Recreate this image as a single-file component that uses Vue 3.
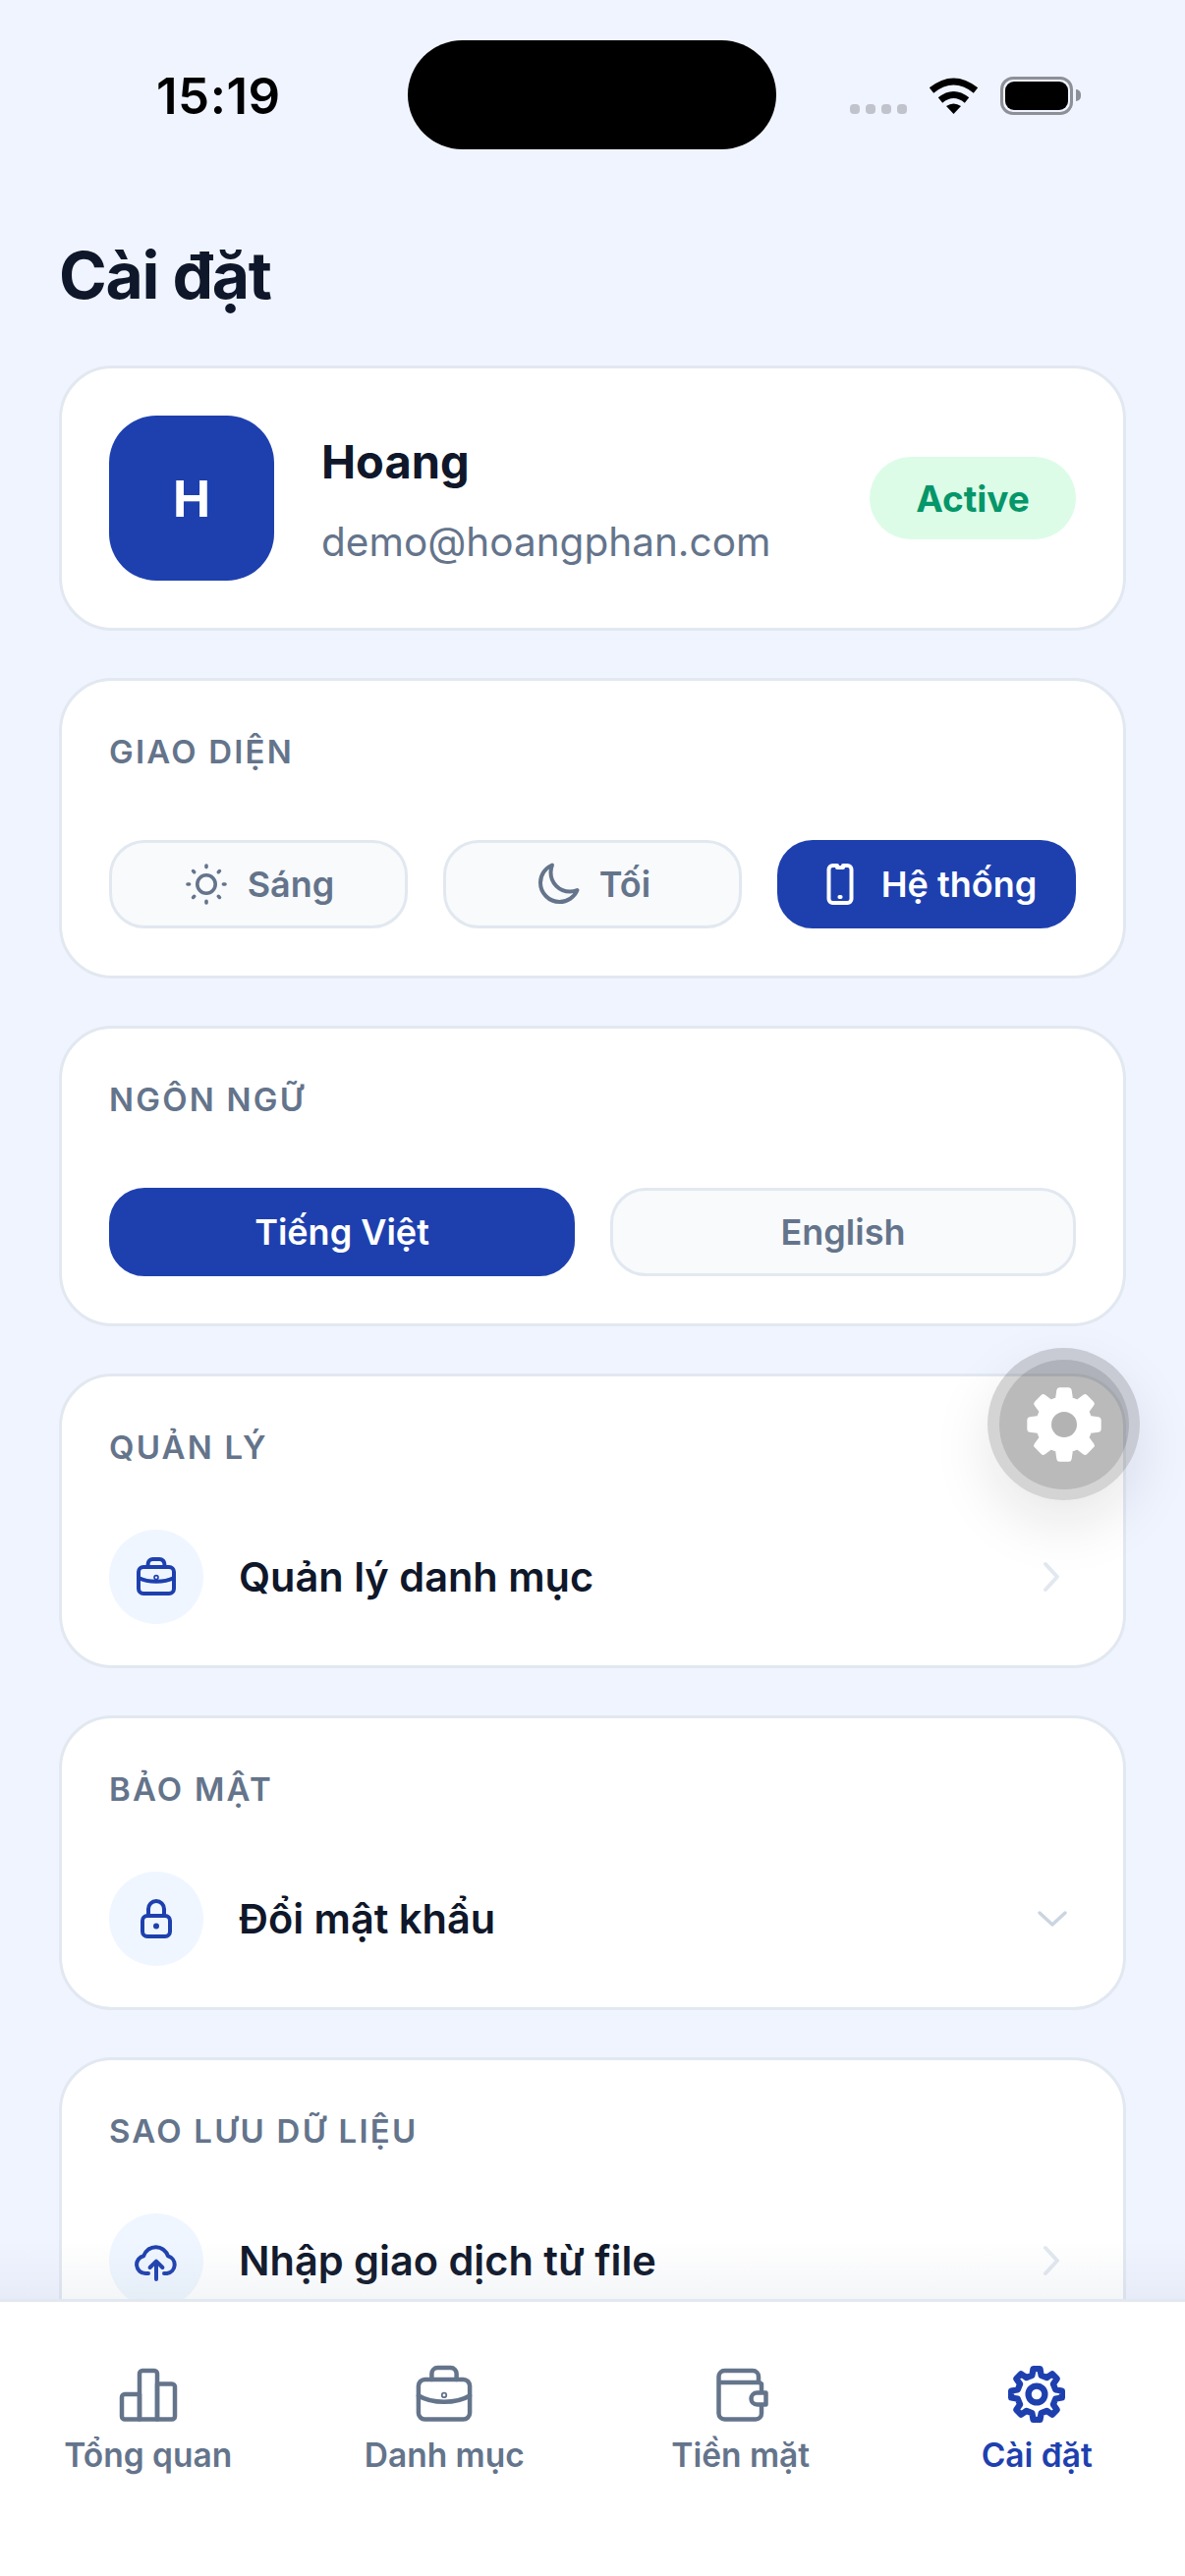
<script setup>
const themes = [
  { key: 'sun', label: 'Sáng' },
  { key: 'moon', label: 'Tối' },
  { key: 'phone', label: 'Hệ thống', active: true }
]

const navItems = [
  { key: 'chart', label: 'Tổng quan' },
  { key: 'case', label: 'Danh mục' },
  { key: 'wallet', label: 'Tiền mặt' },
  { key: 'gear', label: 'Cài đặt', active: true }
]

// tia mặt trời
const sunRays = Array.from({ length: 8 }, (_, i) => {
  const a = (i * Math.PI) / 4
  const c = Math.cos(a)
  const s = Math.sin(a)
  return {
    x1: 12 + 8.7 * c,
    y1: 12 + 8.7 * s,
    x2: 12 + 9.5 * c,
    y2: 12 + 9.5 * s
  }
})

// bánh răng 8 răng
function gearPath(cx, cy, outer, inner) {
  const n = 8
  const step = (Math.PI * 2) / n
  const pts = []
  for (let i = 0; i < n; i++) {
    const a = i * step - Math.PI / 2
    const pt = (r, d) => `${(cx + r * Math.cos(a + d)).toFixed(2)} ${(cy + r * Math.sin(a + d)).toFixed(2)}`
    pts.push(pt(inner, -step * 0.3), pt(outer, -step * 0.17), pt(outer, step * 0.17), pt(inner, step * 0.3))
  }
  return 'M' + pts.join('L') + 'Z'
}

const fabGear = gearPath(40, 40, 35, 26)
const navGear = gearPath(12, 12, 8.7, 6.6)
</script>

<template>
  <div class="screen">
    <div class="status-bar">
      <span class="time">15:19</span>
      <div class="island"></div>
      <div class="status-icons">
        <div class="signal"><i></i><i></i><i></i><i></i></div>
        <svg class="wifi" width="51" height="37" viewBox="0 0 51 37">
          <path d="M3 13Q25.500 -5 48 13" fill="none" stroke="#000" stroke-width="7" />
          <path d="M12 23Q25.500 12 39 23" fill="none" stroke="#000" stroke-width="7" />
          <path d="M18 29Q25.500 24 33 29L25.500 37Z" fill="#000" />
        </svg>
        <div class="battery"><div class="battery-fill"></div></div>
        <div class="battery-nub"></div>
      </div>
    </div>

    <h1 class="page-title">Cài đặt</h1>

    <div class="cards">
      <section class="card profile">
        <div class="avatar">H</div>
        <div class="profile-info">
          <div class="name">Hoang</div>
          <div class="email">demo@hoangphan.com</div>
        </div>
        <div class="badge">Active</div>
      </section>

      <section class="card">
        <h2 class="section-title">GIAO DIỆN</h2>
        <div class="choices">
          <button v-for="t in themes" :key="t.key" class="choice" :class="{ active: t.active }">
            <svg v-if="t.key === 'sun'" class="choice-icon" viewBox="0 0 24 24" fill="none" stroke="currentColor" stroke-width="1.800" stroke-linecap="round">
              <circle cx="12" cy="12" r="4.600" />
              <line v-for="(r, i) in sunRays" :key="i" :x1="r.x1" :y1="r.y1" :x2="r.x2" :y2="r.y2" />
            </svg>
            <svg v-else-if="t.key === 'moon'" class="choice-icon" viewBox="0 0 24 24" fill="none" stroke="currentColor" stroke-width="2" stroke-linejoin="round">
              <path d="M21.750 15A9.700 9.700 0 0 1 18 15.750C12.600 15.750 8.250 11.400 8.250 6C8.250 4.700 8.500 3.400 9 2.250A9.750 9.750 0 0 0 3 11.250C3 16.600 7.400 21 12.750 21A9.750 9.750 0 0 0 21.750 15Z" />
            </svg>
            <svg v-else class="choice-icon" viewBox="0 0 24 24" fill="none" stroke="currentColor" stroke-width="2" stroke-linecap="round" stroke-linejoin="round">
              <path d="M10.500 2.500H8.250A2 2 0 0 0 6.250 4.500V19.500A2 2 0 0 0 8.250 21.500H15.750A2 2 0 0 0 17.750 19.500V4.500A2 2 0 0 0 15.750 2.500H13.500M10.500 2.500V3.500H13.500V2.500M11.700 18.500H12.300" />
            </svg>
            <span>{{ t.label }}</span>
          </button>
        </div>
      </section>

      <section class="card">
        <h2 class="section-title">NGÔN NGỮ</h2>
        <div class="choices two">
          <button class="choice active">Tiếng Việt</button>
          <button class="choice">English</button>
        </div>
      </section>

      <section class="card list">
        <h2 class="section-title">QUẢN LÝ</h2>
        <div class="row">
          <div class="row-icon">
            <svg viewBox="0 0 24 24" fill="none" stroke="currentColor" stroke-width="2" stroke-linecap="round" stroke-linejoin="round">
              <rect x="3" y="7" width="18" height="13.500" rx="2.500" />
              <path d="M7.800 7V5.500A2.500 2.500 0 0 1 10.300 3H13.700A2.500 2.500 0 0 1 16.200 5.500V7" />
              <path d="M3 12.500C8 15 16 15 21 12.500" />
              <circle cx="12" cy="12.300" r="0.400" />
            </svg>
          </div>
          <span class="row-label">Quản lý danh mục</span>
          <svg class="chevron" viewBox="0 0 24 36" fill="none" stroke-width="4" stroke-linecap="round" stroke-linejoin="round">
            <path d="M5 5L17 18L5 31" />
          </svg>
        </div>
      </section>

      <section class="card list">
        <h2 class="section-title">BẢO MẬT</h2>
        <div class="row">
          <div class="row-icon">
            <svg viewBox="0 0 24 24" fill="none" stroke="currentColor" stroke-width="2" stroke-linecap="round" stroke-linejoin="round">
              <rect x="5" y="10.500" width="14" height="10.500" rx="2.500" />
              <path d="M8 10.500V7A4 4 0 0 1 16 7V10.500" />
              <circle cx="12" cy="15.700" r="1.500" fill="currentColor" stroke="none" />
            </svg>
          </div>
          <span class="row-label">Đổi mật khẩu</span>
          <svg class="chevron-down" viewBox="0 0 36 24" fill="none" stroke-width="3.500" stroke-linecap="round" stroke-linejoin="round">
            <path d="M5 6L18 18L31 6" />
          </svg>
        </div>
      </section>

      <section class="card list">
        <h2 class="section-title">SAO LƯU DỮ LIỆU</h2>
        <div class="row">
          <div class="row-icon">
            <svg viewBox="0 0 24 24" fill="none" stroke="currentColor" stroke-width="2" stroke-linecap="round" stroke-linejoin="round">
              <path d="M8 18.500H6.500A4.500 4.500 0 0 1 5.600 9.600A6.500 6.500 0 0 1 18 9.700A4.500 4.500 0 0 1 17.500 18.500H16" />
              <path d="M12 21.500V12.500M8.800 15.500L12 12.300L15.200 15.500" />
            </svg>
          </div>
          <span class="row-label">Nhập giao dịch từ file</span>
          <svg class="chevron" viewBox="0 0 24 36" fill="none" stroke-width="4" stroke-linecap="round" stroke-linejoin="round">
            <path d="M5 5L17 18L5 31" />
          </svg>
        </div>
      </section>
    </div>

    <div class="fab">
      <div class="fab-inner">
        <svg width="80" height="80" viewBox="0 0 80 80">
          <path :d="fabGear" fill="#fff" stroke="#fff" stroke-width="6" stroke-linejoin="round" />
          <circle cx="40" cy="40" r="13" fill="#b3b3b3" />
        </svg>
      </div>
    </div>

    <div class="fade"></div>

    <nav class="tabbar">
      <div v-for="item in navItems" :key="item.key" class="tab" :class="{ active: item.active }">
        <svg class="tab-icon" viewBox="0 0 24 24" fill="none" stroke="currentColor" stroke-width="1.500" stroke-linecap="round" stroke-linejoin="round">
          <template v-if="item.key === 'chart'">
            <path d="M3 13A1 1 0 0 1 4 12H9V20.500H4A1 1 0 0 1 3 19.500Z" />
            <path d="M9 5A1 1 0 0 1 10 4H14A1 1 0 0 1 15 5V20.500H9Z" />
            <path d="M15 8.500H20A1 1 0 0 1 21 9.500V19.500A1 1 0 0 1 20 20.500H15Z" />
          </template>
          <template v-else-if="item.key === 'case'">
            <rect x="3.300" y="7" width="17.400" height="13.500" rx="2.200" />
            <path d="M7.800 7V5A2 2 0 0 1 9.800 3H14.200A2 2 0 0 1 16.200 5V7" />
            <path d="M3.300 12.500C8 15.300 16 15.300 20.700 12.500" />
            <circle cx="12" cy="12.300" r="0.300" />
          </template>
          <template v-else-if="item.key === 'wallet'">
            <path d="M4.500 8V6A2 2 0 0 1 6.500 4H16A2 2 0 0 1 18 6V8H4.500V18.500A2 2 0 0 0 6.500 20.500H17A2 2 0 0 0 19 18.500V8.500A1.500 1.500 0 0 0 18 8" />
            <path d="M19 11.500H17.500A1.800 1.800 0 0 0 17.500 15.500H20.500V11.500Z" fill="#fff" />
          </template>
          <template v-else>
            <path :d="navGear" stroke-width="2.100" />
            <circle cx="12" cy="12" r="2.800" stroke-width="2.100" />
          </template>
        </svg>
        <span>{{ item.label }}</span>
      </div>
    </nav>
  </div>
</template>

<style>
html,
body {
  margin: 0;
  background: #f0f4ff;
}
</style>

<style scoped>
.screen {
  position: relative;
  width: 1206px;
  height: 2622px;
  overflow: hidden;
  background: #f0f4ff;
  font-family: Inter, 'Noto Sans', sans-serif;
  color: #0f172a;
}

.status-bar {
  display: flex;
  align-items: flex-start;
  height: 152px;
  padding-top: 41px;
  box-sizing: border-box;
}

.time {
  width: 415px;
  margin-top: 31px;
  padding-left: 159px;
  box-sizing: border-box;
  font-size: 51px;
  line-height: 52px;
  font-weight: 600;
  color: #000;
  letter-spacing: 0.500px;
  flex-shrink: 0;
}

.island {
  width: 375px;
  height: 111px;
  border-radius: 56px;
  background: #000;
  flex-shrink: 0;
}

.status-icons {
  display: flex;
  align-items: flex-start;
  margin-left: 75px;
  margin-top: 37px;
}

.signal {
  display: flex;
  gap: 6px;
  margin-top: 28px;
}

.signal i {
  display: block;
  width: 10px;
  height: 10px;
  border-radius: 4px;
  background: #c1c3cc;
}

.wifi {
  margin-left: 22px;
  margin-top: 1px;
}

.battery {
  width: 74px;
  height: 39px;
  margin-left: 22px;
  box-sizing: border-box;
  border: 3.5px solid #8e9098;
  border-radius: 13px;
  padding: 2px;
}

.battery-fill {
  width: 100%;
  height: 100%;
  border-radius: 9px;
  background: #000;
}

.battery-nub {
  width: 5px;
  height: 12px;
  margin: 13px 0 0 3px;
  border-radius: 0 6px 6px 0;
  background: #8e9098;
}

.page-title {
  margin: 88px 0 0 60px;
  height: 80px;
  font-size: 66px;
  line-height: 80px;
  font-weight: 700;
  letter-spacing: -1.300px;
}

.cards {
  display: flex;
  flex-direction: column;
  gap: 48px;
  margin: 52px 60px 0;
}

.card {
  background: #fff;
  border: 3px solid #e2e8f0;
  border-radius: 54px;
  padding: 48px;
}

.card.list {
  padding-bottom: 42px;
}

.profile {
  display: flex;
  align-items: center;
  padding-top: 48px;
}

.avatar {
  width: 168px;
  height: 168px;
  flex-shrink: 0;
  border-radius: 48px;
  background: #1e40af;
  color: #fff;
  font-size: 51px;
  font-weight: 700;
  display: flex;
  align-items: center;
  justify-content: center;
}

.profile-info {
  flex: 1;
  margin-left: 48px;
  padding-top: 4px;
}

.name {
  font-size: 47px;
  line-height: 58px;
  font-weight: 700;
}

.email {
  margin-top: 27px;
  font-size: 40.500px;
  line-height: 52px;
  color: #64748b;
}

.badge {
  width: 210px;
  height: 84px;
  border-radius: 42px;
  background: #dcfce7;
  color: #059669;
  font-size: 37px;
  font-weight: 700;
  display: flex;
  align-items: center;
  justify-content: center;
}

.section-title {
  margin: 0;
  height: 48px;
  font-size: 33px;
  line-height: 48px;
  font-weight: 600;
  letter-spacing: 2.200px;
  color: #64748b;
}

.choices {
  display: grid;
  grid-template-columns: repeat(3, 1fr);
  gap: 36px;
  margin-top: 66px;
}

.choices.two {
  grid-template-columns: repeat(2, 1fr);
}

.choice {
  height: 90px;
  box-sizing: border-box;
  display: flex;
  align-items: center;
  justify-content: center;
  gap: 18px;
  padding: 0;
  border: 3px solid #e2e8f0;
  border-radius: 36px;
  background: #f8fafc;
  color: #64748b;
  font-family: inherit;
  font-size: 36px;
  font-weight: 600;
}

.choice.active {
  background: #1e40af;
  border-color: #1e40af;
  color: #fff;
}

.choice-icon {
  width: 48px;
  height: 48px;
  flex-shrink: 0;
}

.row {
  display: flex;
  align-items: center;
  margin-top: 60px;
}

.row-icon {
  width: 96px;
  height: 96px;
  flex-shrink: 0;
  border-radius: 50%;
  background: #eff6ff;
  color: #1e40af;
  display: flex;
  align-items: center;
  justify-content: center;
}

.row-icon svg {
  width: 48px;
  height: 48px;
}

.row-label {
  flex: 1;
  margin-left: 36px;
  font-size: 41.500px;
  font-weight: 600;
}

.chevron {
  width: 24px;
  height: 36px;
  margin-right: 12px;
  stroke: #e2e8f0;
}

.chevron-down {
  width: 36px;
  height: 24px;
  margin-right: 6px;
  stroke: #cbd5e1;
}

.fab {
  position: absolute;
  left: 1005px;
  top: 1372px;
  width: 155px;
  height: 155px;
  border-radius: 50%;
  background: rgba(40, 40, 40, 0.2);
  box-shadow: 0 24px 60px rgba(15, 23, 42, 0.1);
  display: flex;
  align-items: center;
  justify-content: center;
}

.fab-inner {
  width: 132px;
  height: 132px;
  border-radius: 50%;
  background: rgba(0, 0, 0, 0.12);
  display: flex;
  align-items: center;
  justify-content: center;
}

.fade {
  position: absolute;
  left: 0;
  right: 0;
  bottom: 282px;
  height: 60px;
  background: linear-gradient(rgba(148, 163, 184, 0), rgba(148, 163, 184, 0.1));
}

.tabbar {
  position: absolute;
  left: 0;
  right: 0;
  bottom: 0;
  height: 282px;
  box-sizing: border-box;
  border-top: 3px solid #e2e8f0;
  background: #fff;
  display: grid;
  grid-template-columns: repeat(4, 1fr);
  padding-top: 58px;
}

.tab {
  display: flex;
  flex-direction: column;
  align-items: center;
  gap: 4px;
  color: #64748b;
  font-size: 33.500px;
  line-height: 44px;
  font-weight: 600;
}

.tab.active {
  color: #1e40af;
}

.tab-icon {
  width: 72px;
  height: 72px;
}
</style>
